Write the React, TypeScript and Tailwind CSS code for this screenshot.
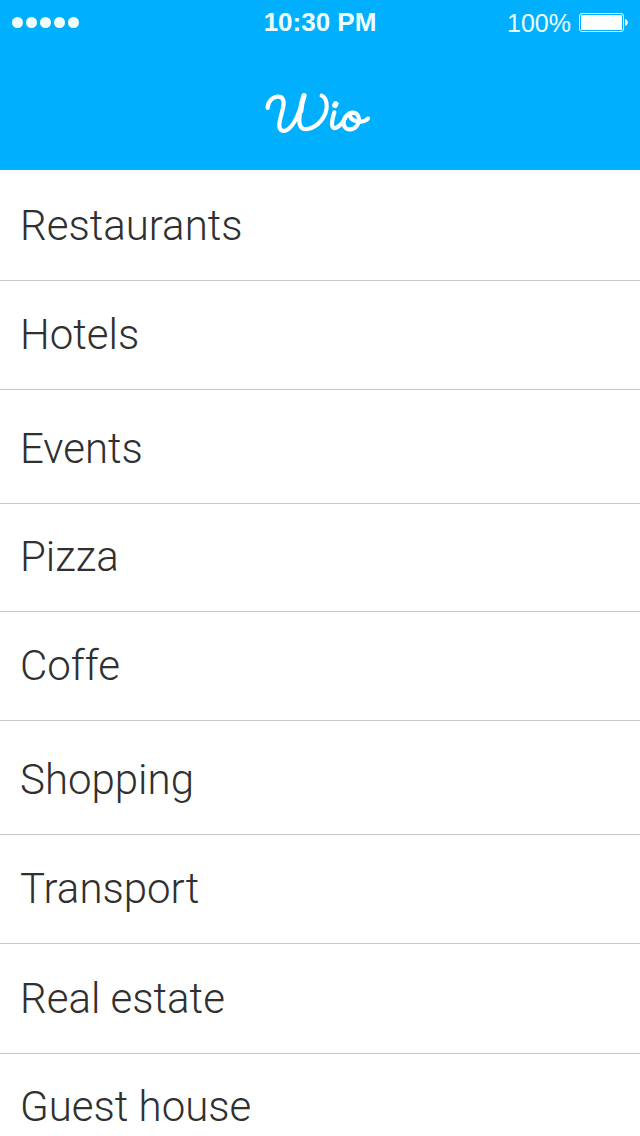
const categories = [
  { name: "Restaurants", height: "h-[111px]" },
  { name: "Hotels", height: "h-[109px]" },
  { name: "Events", height: "h-[114px]" },
  { name: "Pizza", height: "h-[108px]" },
  { name: "Coffe", height: "h-[109px]" },
  { name: "Shopping", height: "h-[114px]" },
  { name: "Transport", height: "h-[109px]" },
  { name: "Real estate", height: "h-[110px]" },
  { name: "Guest house", height: "h-[108px]" },
];

function Signal() {
  return (
    <div className="flex gap-[3px]" role="img" aria-label="Signal strength: full">
      {[0, 1, 2, 3, 4].map((dot) => (
        <span key={dot} className="size-[11px] rounded-full bg-[#effffd]" />
      ))}
    </div>
  );
}

function Battery() {
  return (
    <svg viewBox="0 0 49 19" className="h-[19px] w-[49px]" role="img" aria-label="Battery full">
      <rect x="0.5" y="0.5" width="44" height="18" rx="2.5" fill="none" stroke="#effffd" />
      <rect x="2" y="2" width="41" height="15" rx="1" fill="#fff" />
      <path d="M46 6c1.7.5 2.8 1.8 2.8 3.5s-1.100 3-2.800 3.500z" fill="#effffd" />
    </svg>
  );
}

function Logo() {
  return (
    <svg
      viewBox="0 0 375 195"
      className="h-[65px] w-[125px]"
      fill="none"
      stroke="#fff"
      strokeWidth="12.5"
      strokeLinecap="round"
      strokeLinejoin="round"
      role="img"
      aria-label="Wio"
    >
      <path d="M38 84C38 66 52 51 68 50C85 49 89 64 84 84C80 104 73 120 73 136C73 150 82 156 94 151C116 142 138 92 147 46C139 72 133 96 133 121C133 142 142 150 158 147C188 142 215 110 215 79C215 62 210 51 200 47" />
      <path d="M147 47C143 58 138 80 137 94" strokeWidth="16" />
      <path d="M238 97C234 110 231 122 231 132C231 143 236 146 244 143C255 138 265 126 271 113" />
      <path d="M242 72L240 76" strokeWidth="17" />
      <path d="M298 99C281 94 266 112 266 128C266 142 275 150 287 148C303 146 313 131 312 117C311 104 302 96 291 98C282 101 283 115 297 121C313 128 332 125 339 115" />
    </svg>
  );
}

export default function App() {
  return (
    <div className="flex h-screen flex-col overflow-hidden bg-white font-['Liberation_Sans',Arial,sans-serif]">
      <header className="shrink-0 bg-[#00b0ff]">
        <div className="grid h-[45px] grid-cols-3 items-center px-3 text-[#effffd]">
          <Signal />
          <time className="pb-[2px] text-center text-[26px] leading-[30px] font-bold">10:30 PM</time>
          <div className="flex items-center justify-end gap-2">
            <span className="text-[25px] leading-[30px]">100%</span>
            <Battery />
          </div>
        </div>
        <h1 className="flex h-[125px] justify-center pt-[35px] pr-[5px]">
          <Logo />
        </h1>
      </header>
      <nav aria-label="Categories" className="min-h-0 flex-1 overflow-y-auto [scrollbar-width:none]">
        <ul>
          {categories.map(({ name, height }) => (
            <li key={name}>
              <a
                href="#"
                className={`${height} flex items-end border-b border-[#c8c8c8] px-5 pb-[29px] font-[Roboto,'Liberation_Sans',sans-serif] text-[42px] leading-[50px] font-light text-[#303030]`}
              >
                {name}
              </a>
            </li>
          ))}
        </ul>
      </nav>
    </div>
  );
}
